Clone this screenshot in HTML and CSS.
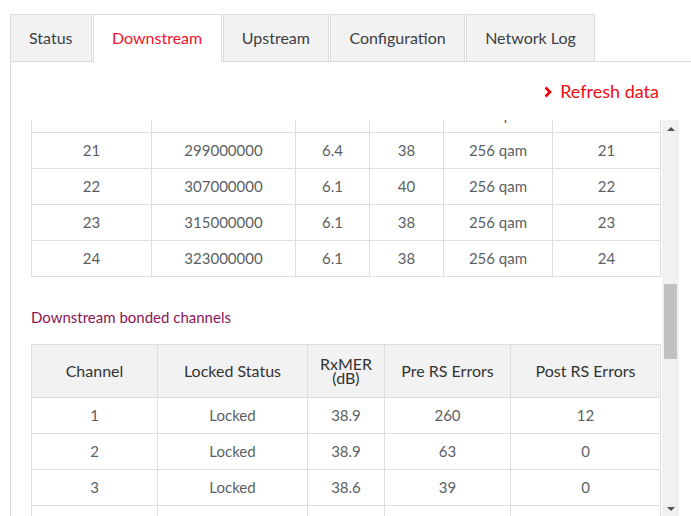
FILE: index.html
```html
<!DOCTYPE html>
<html lang="en">
<head>
<meta charset="utf-8">
<title>Downstream</title>
<link rel="stylesheet" href="styles.css">
</head>
<body>
<div class="page">
  <nav class="tabs">
    <a class="tab">Status</a>
    <a class="tab active">Downstream</a>
    <a class="tab">Upstream</a>
    <a class="tab">Configuration</a>
    <a class="tab">Network Log</a>
  </nav>
  <section class="panel">
    <div class="refresh-row">
      <a class="refresh"><svg class="chev" width="8" height="12" viewBox="0 0 8 12"><polyline points="1.5,1.5 6,6 1.5,10.5" fill="none" stroke="#f00000" stroke-width="2.6"/></svg>Refresh data</a>
    </div>
    <div class="scroll-wrap">
      <div class="scroll" id="scroll">
        <table class="grid t1">
          <colgroup><col class="c1a"><col class="c1b"><col class="c1c"><col class="c1d"><col class="c1e"><col class="c1f"></colgroup>
          <thead><tr><th>Channel</th><th>Frequency (Hz)</th><th>Power (dBmV)</th><th>SNR (dB)</th><th>Modulation</th><th>Channel ID</th></tr></thead>
          <tbody>
            <tr><td>1</td><td>139000000</td><td>6.9</td><td>38</td><td>256 qam</td><td>1</td></tr>
            <tr><td>2</td><td>147000000</td><td>6.8</td><td>38</td><td>256 qam</td><td>2</td></tr>
            <tr><td>3</td><td>155000000</td><td>6.8</td><td>38</td><td>256 qam</td><td>3</td></tr>
            <tr><td>4</td><td>163000000</td><td>6.6</td><td>38</td><td>256 qam</td><td>4</td></tr>
            <tr><td>5</td><td>171000000</td><td>6.5</td><td>38</td><td>256 qam</td><td>5</td></tr>
            <tr><td>6</td><td>179000000</td><td>6.5</td><td>38</td><td>256 qam</td><td>6</td></tr>
            <tr><td>7</td><td>187000000</td><td>6.4</td><td>38</td><td>256 qam</td><td>7</td></tr>
            <tr><td>8</td><td>195000000</td><td>6.5</td><td>38</td><td>256 qam</td><td>8</td></tr>
            <tr><td>9</td><td>203000000</td><td>6.6</td><td>38</td><td>256 qam</td><td>9</td></tr>
            <tr><td>10</td><td>211000000</td><td>6.5</td><td>38</td><td>256 qam</td><td>10</td></tr>
            <tr><td>11</td><td>219000000</td><td>6.4</td><td>38</td><td>256 qam</td><td>11</td></tr>
            <tr><td>12</td><td>227000000</td><td>6.4</td><td>38</td><td>256 qam</td><td>12</td></tr>
            <tr><td>13</td><td>235000000</td><td>6.3</td><td>38</td><td>256 qam</td><td>13</td></tr>
            <tr><td>14</td><td>243000000</td><td>6.4</td><td>38</td><td>256 qam</td><td>14</td></tr>
            <tr><td>15</td><td>251000000</td><td>6.5</td><td>38</td><td>256 qam</td><td>15</td></tr>
            <tr><td>16</td><td>259000000</td><td>6.4</td><td>38</td><td>256 qam</td><td>16</td></tr>
            <tr><td>17</td><td>267000000</td><td>6.3</td><td>38</td><td>256 qam</td><td>17</td></tr>
            <tr><td>18</td><td>275000000</td><td>6.4</td><td>38</td><td>256 qam</td><td>18</td></tr>
            <tr><td>19</td><td>283000000</td><td>6.4</td><td>38</td><td>256 qam</td><td>19</td></tr>
            <tr><td>20</td><td>291000000</td><td>6.4</td><td>38</td><td>256 qam</td><td>20</td></tr>
            <tr id="r21"><td>21</td><td>299000000</td><td>6.4</td><td>38</td><td>256 qam</td><td>21</td></tr>
            <tr><td>22</td><td>307000000</td><td>6.1</td><td>40</td><td>256 qam</td><td>22</td></tr>
            <tr><td>23</td><td>315000000</td><td>6.1</td><td>38</td><td>256 qam</td><td>23</td></tr>
            <tr><td>24</td><td>323000000</td><td>6.1</td><td>38</td><td>256 qam</td><td>24</td></tr>
          </tbody>
        </table>
        <h3 class="section-title">Downstream bonded channels</h3>
        <table class="grid t2">
          <colgroup><col class="c2a"><col class="c2b"><col class="c2c"><col class="c2d"><col class="c2e"></colgroup>
          <thead><tr><th>Channel</th><th>Locked Status</th><th>RxMER (dB)</th><th>Pre RS Errors</th><th>Post RS Errors</th></tr></thead>
          <tbody>
            <tr><td>1</td><td>Locked</td><td>38.9</td><td>260</td><td>12</td></tr>
            <tr><td>2</td><td>Locked</td><td>38.9</td><td>63</td><td>0</td></tr>
            <tr><td>3</td><td>Locked</td><td>38.6</td><td>39</td><td>0</td></tr>
            <tr><td>4</td><td>Locked</td><td>38.6</td><td>41</td><td>0</td></tr>
            <tr><td>5</td><td>Locked</td><td>38.6</td><td>37</td><td>0</td></tr>
            <tr><td>6</td><td>Locked</td><td>38.6</td><td>35</td><td>0</td></tr>
            <tr><td>7</td><td>Locked</td><td>38.9</td><td>30</td><td>0</td></tr>
            <tr><td>8</td><td>Locked</td><td>38.6</td><td>29</td><td>0</td></tr>
            <tr><td>9</td><td>Locked</td><td>38.9</td><td>33</td><td>0</td></tr>
            <tr><td>10</td><td>Locked</td><td>38.6</td><td>31</td><td>0</td></tr>
            <tr><td>11</td><td>Locked</td><td>38.6</td><td>28</td><td>0</td></tr>
            <tr><td>12</td><td>Locked</td><td>38.6</td><td>26</td><td>0</td></tr>
            <tr><td>13</td><td>Locked</td><td>38.6</td><td>30</td><td>0</td></tr>
            <tr><td>14</td><td>Locked</td><td>38.6</td><td>27</td><td>0</td></tr>
            <tr><td>15</td><td>Locked</td><td>38.6</td><td>25</td><td>0</td></tr>
            <tr><td>16</td><td>Locked</td><td>38.6</td><td>24</td><td>0</td></tr>
            <tr><td>17</td><td>Locked</td><td>38.6</td><td>22</td><td>0</td></tr>
            <tr><td>18</td><td>Locked</td><td>38.6</td><td>23</td><td>0</td></tr>
            <tr><td>19</td><td>Locked</td><td>38.6</td><td>21</td><td>0</td></tr>
            <tr><td>20</td><td>Locked</td><td>38.6</td><td>20</td><td>0</td></tr>
            <tr><td>21</td><td>Locked</td><td>38.6</td><td>19</td><td>0</td></tr>
            <tr><td>22</td><td>Locked</td><td>40.3</td><td>18</td><td>0</td></tr>
            <tr><td>23</td><td>Locked</td><td>38.6</td><td>17</td><td>0</td></tr>
            <tr><td>24</td><td>Locked</td><td>38.6</td><td>16</td><td>0</td></tr>
          </tbody>
        </table>
      </div>
      <div class="vbar" aria-hidden="true">
        <div class="vbar-btn"><svg width="8" height="4" viewBox="0 0 8 4"><polygon points="0,4 4,0 8,4" fill="#505050"/></svg></div>
        <div class="vbar-track"><div class="vbar-thumb" id="thumb"></div></div>
        <div class="vbar-btn"><svg width="8" height="4" viewBox="0 0 8 4"><polygon points="0,0 8,0 4,4" fill="#505050"/></svg></div>
      </div>
    </div>
  </section>
</div>
<script src="script.js"></script>
</body>
</html>
```
FILE: styles.css
```css
html, body {
  margin: 0;
  padding: 0;
  background: #fff;
  overflow: hidden;
}
body {
  font-family: Lato, "Liberation Sans", sans-serif;
  color: #333;
}
.page {
  padding: 14px 0 0 10px;
}
.tabs {
  display: flex;
  gap: 1px;
  align-items: flex-end;
}
.tab {
  display: block;
  height: 46px;
  line-height: 46px;
  padding: 0 18.5px 0 18px;
  border: 1px solid #dcdcdc;
  border-bottom: none;
  background: #f2f2f2;
  color: #3c3f44;
  font-size: 16px;
  cursor: pointer;
}
.tab.active {
  background: #fff;
  color: #f2142c;
  height: 47px;
  margin-bottom: -1px;
  position: relative;
  z-index: 1;
}
.panel {
  border-top: 1px solid #dcdcdc;
  border-left: 1px solid #dcdcdc;
  height: 460px;
}
.refresh-row {
  height: 58px;
  display: flex;
  justify-content: flex-end;
  align-items: center;
  padding-right: 32px;
}
.refresh {
  display: flex;
  align-items: center;
  gap: 8px;
  color: #f00a14;
  font-size: 18px;
  cursor: pointer;
}
.chev {
  display: block;
  margin-top: 1px;
}
.scroll-wrap {
  position: relative;
  height: 397px;
  margin-right: 12px;
}
.scroll {
  height: 100%;
  overflow-y: auto;
  scrollbar-width: none;
  padding: 0 18px 0 20px;
}
.scroll::-webkit-scrollbar {
  display: none;
}
.vbar {
  position: absolute;
  top: 0;
  right: 0;
  bottom: 0;
  width: 17px;
  background: #f1f1f1;
  display: flex;
  flex-direction: column;
}
.vbar-btn {
  height: 17px;
  display: flex;
  align-items: center;
  justify-content: center;
}
.vbar-btn svg {
  display: block;
}
.vbar-track {
  flex: 1;
  position: relative;
}
.vbar-thumb {
  position: absolute;
  left: 2px;
  right: 2px;
  top: 149px;
  height: 76px;
  background: #c1c1c1;
}
.grid {
  width: 100%;
  border-collapse: collapse;
  table-layout: fixed;
  margin-top: 18px;
}
.grid th, .grid td {
  border: 1px solid #dedede;
  text-align: center;
  padding: 0 4px;
}
.grid th {
  background: #f2f2f2;
  color: #333;
  font-weight: normal;
  font-size: 16px;
  line-height: 14px;
  height: 52px;
  padding-top: 0;
  padding-bottom: 0;
}
.grid td {
  color: #5b5f63;
  font-size: 15px;
  line-height: 35px;
  height: 35px;
}
.c1a { width: 120px; }
.c1b { width: 144px; }
.c1c { width: 74px; }
.c1d { width: 74px; }
.c1e { width: 109px; }
.c1f { width: 108px; }
.c2a { width: 126px; }
.c2b { width: 150px; }
.c2c { width: 77px; }
.c2d { width: 126px; }
.c2e { width: 150px; }
.section-title {
  margin: 30px 0 17px;
  font-weight: normal;
  font-size: 15px;
  line-height: 20px;
  color: #8c1456;
}
.t2 {
  margin-top: 0;
}
```
FILE: script.js
```js
(function () {
  var box = document.getElementById('scroll');
  var row = document.getElementById('r21');
  var thumb = document.getElementById('thumb');
  var delta = row.getBoundingClientRect().top - 133;
  box.scrollTop = box.scrollTop + delta;
  var track = thumb.parentNode.clientHeight;
  var total = box.scrollHeight;
  var visible = box.clientHeight;
  var len = Math.max(20, Math.round(track * visible / total));
  var maxTop = track - len;
  var top = total > visible ? Math.round(maxTop * box.scrollTop / (total - visible)) : 0;
  thumb.style.height = len + 'px';
  thumb.style.top = top + 'px';
})();
```
